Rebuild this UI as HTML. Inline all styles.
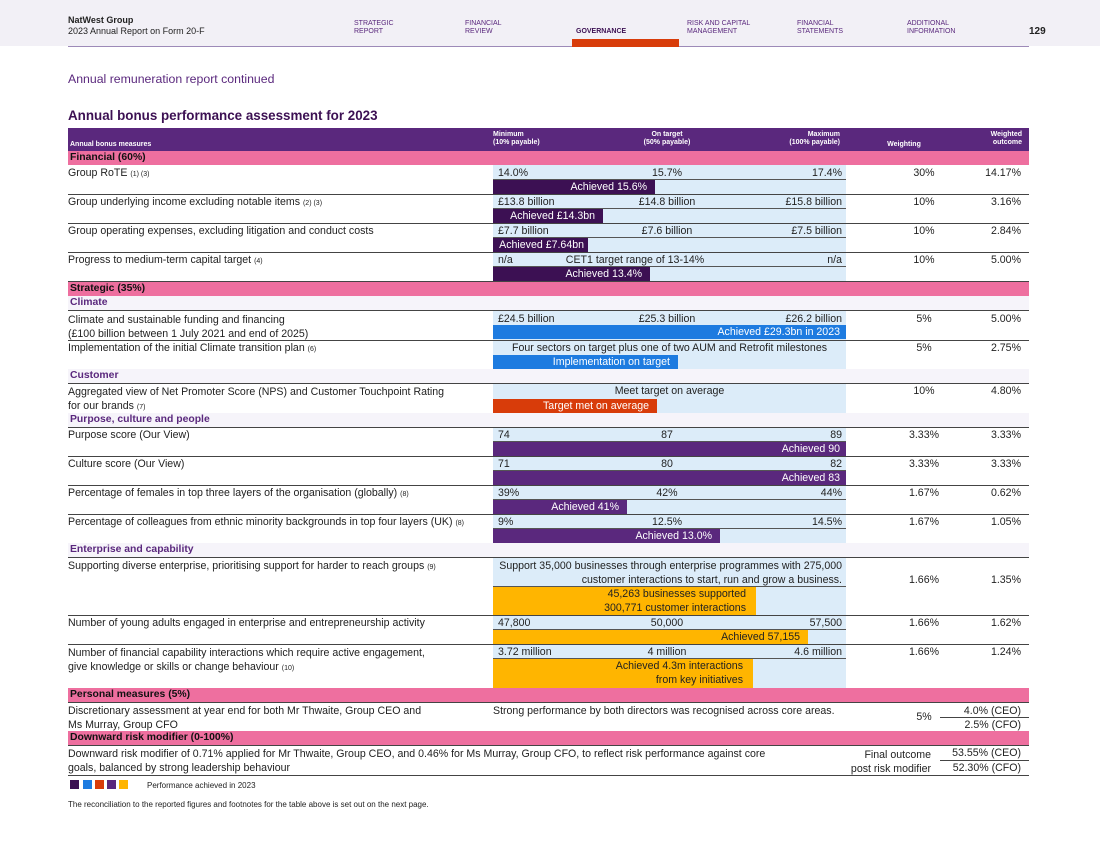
<!DOCTYPE html>
<html><head><meta charset="utf-8"><style>
*{margin:0;padding:0;box-sizing:border-box}
body{width:1100px;height:865px;position:relative;background:#fff;font-family:"Liberation Sans",sans-serif;color:#222;overflow:hidden}
div{position:absolute}
.t{font-size:10.6px;line-height:12px;white-space:nowrap}
.r{text-align:right}
.c{text-align:center}
.hl{left:68px;width:961px;height:1px;background:#444}
.band{left:493px;width:353px;background:#dcecf9}
.vl{left:493px;width:353px;height:1px;background:#555}
.pink{left:68px;width:961px;height:14px;background:#ee6f9f;font-size:10.4px;line-height:14px;font-weight:bold;padding-left:2px;color:#111}
.sub{left:68px;width:961px;height:14px;background:#f6f4fa;font-size:10.4px;line-height:14px;font-weight:bold;padding-left:2px;color:#5a287d}
.bar{left:493px;height:14px;font-size:10.6px;line-height:14px;text-align:right;padding-right:8px;color:#fff;white-space:nowrap}
.dp{background:#3c1053}.bl{background:#1d7be0}.or{background:#d83c0a}.pu{background:#5a287d}.ye{background:#ffb500;color:#222}
.nav{font-size:7px;line-height:8px;color:#5a287d;top:20px}
.sm{font-size:7px}
</style></head><body>
<div style="left:0;top:0;width:1100px;height:46px;background:#f2f0f6"></div>
<div class="t" style="left:68px;top:15px;font-size:9px;font-weight:bold;line-height:10px">NatWest Group</div>
<div class="t" style="left:68px;top:26px;font-size:9px;line-height:10px">2023 Annual Report on Form 20-F</div>
<div class="nav" style="left:354px">STRATEGIC<br>REPORT</div>
<div class="nav" style="left:465px">FINANCIAL<br>REVIEW</div>
<div class="nav" style="left:576px;top:28px;font-weight:bold;color:#3c1053">GOVERNANCE</div>
<div class="nav" style="left:687px">RISK AND CAPITAL<br>MANAGEMENT</div>
<div class="nav" style="left:797px">FINANCIAL<br>STATEMENTS</div>
<div class="nav" style="left:907px">ADDITIONAL<br>INFORMATION</div>
<div class="t" style="left:1029px;top:26px;font-size:10px;font-weight:bold">129</div>
<div style="left:68px;top:46px;width:961px;height:1px;background:#9d8ab8"></div>
<div style="left:572px;top:39px;width:107px;height:8px;background:#d83c0a"></div>

<div class="t" style="left:68px;top:72px;font-size:12.3px;line-height:14px;color:#5a287d">Annual remuneration report continued</div>
<div class="t" style="left:68px;top:107px;font-size:13.4px;line-height:17px;font-weight:bold;color:#3c1053">Annual bonus performance assessment for 2023</div>

<div style="left:68px;top:128px;width:961px;height:23px;background:#5a287d"></div>
<div class="t" style="left:70px;top:141px;font-size:7px;line-height:8px;color:#fff;font-weight:bold">Annual bonus measures</div>
<div class="t" style="left:493px;top:131px;font-size:7px;line-height:8px;color:#fff;font-weight:bold">Minimum<br>(10% payable)</div>
<div class="t c" style="left:617px;width:100px;top:131px;font-size:7px;line-height:8px;color:#fff;font-weight:bold">On target<br>(50% payable)</div>
<div class="t r" style="left:740px;width:100px;top:131px;font-size:7px;line-height:8px;color:#fff;font-weight:bold">Maximum<br>(100% payable)</div>
<div class="t c" style="left:854px;width:100px;top:141px;font-size:7px;line-height:8px;color:#fff;font-weight:bold">Weighting</div>
<div class="t r" style="left:920px;width:102px;top:131px;font-size:7px;line-height:8px;color:#fff;font-weight:bold">Weighted<br>outcome</div>

<div class="pink" style="top:151px">Financial (60%)</div>

<div class="band" style="top:165px;height:29px"></div>
<div class="t" style="left:68px;top:167px">Group RoTE <span class="sm">(1) (3)</span></div>
<div class="t" style="left:498px;top:167px">14.0%</div><div class="t c" style="left:617px;width:100px;top:167px">15.7%</div><div class="t r" style="left:742px;width:100px;top:167px">17.4%</div>
<div class="vl" style="top:179px"></div>
<div class="bar dp" style="top:180px;width:162px">Achieved 15.6%</div>
<div class="t c" style="left:874px;width:100px;top:167px">30%</div><div class="t r" style="left:920px;width:101px;top:167px">14.17%</div>
<div class="hl" style="top:194px"></div>

<div class="band" style="top:195px;height:28px"></div>
<div class="t" style="left:68px;top:196px">Group underlying income excluding notable items <span class="sm">(2) (3)</span></div>
<div class="t" style="left:498px;top:196px">£13.8 billion</div><div class="t c" style="left:617px;width:100px;top:196px">£14.8 billion</div><div class="t r" style="left:742px;width:100px;top:196px">£15.8 billion</div>
<div class="vl" style="top:208px"></div>
<div class="bar dp" style="top:209px;width:110px">Achieved £14.3bn</div>
<div class="t c" style="left:874px;width:100px;top:196px">10%</div><div class="t r" style="left:920px;width:101px;top:196px">3.16%</div>
<div class="hl" style="top:223px"></div>

<div class="band" style="top:224px;height:28px"></div>
<div class="t" style="left:68px;top:225px">Group operating expenses, excluding litigation and conduct costs</div>
<div class="t" style="left:498px;top:225px">£7.7 billion</div><div class="t c" style="left:617px;width:100px;top:225px">£7.6 billion</div><div class="t r" style="left:742px;width:100px;top:225px">£7.5 billion</div>
<div class="vl" style="top:237px"></div>
<div class="bar dp" style="top:238px;width:95px;padding-right:4px">Achieved £7.64bn</div>
<div class="t c" style="left:874px;width:100px;top:225px">10%</div><div class="t r" style="left:920px;width:101px;top:225px">2.84%</div>
<div class="hl" style="top:252px"></div>

<div class="band" style="top:253px;height:28px"></div>
<div class="t" style="left:68px;top:254px">Progress to medium-term capital target <span class="sm">(4)</span></div>
<div class="t" style="left:498px;top:254px">n/a</div><div class="t c" style="left:565px;width:140px;top:254px">CET1 target range of 13-14%</div><div class="t r" style="left:742px;width:100px;top:254px">n/a</div>
<div class="vl" style="top:266px"></div>
<div class="bar dp" style="top:267px;width:157px">Achieved 13.4%</div>
<div class="t c" style="left:874px;width:100px;top:254px">10%</div><div class="t r" style="left:920px;width:101px;top:254px">5.00%</div>
<div class="hl" style="top:281px"></div>

<div class="pink" style="top:282px">Strategic (35%)</div>
<div class="sub" style="top:296px">Climate</div>
<div class="hl" style="top:310px"></div>

<div class="band" style="top:311px;height:29px"></div>
<div class="t" style="left:68px;top:313px;line-height:14px">Climate and sustainable funding and financing<br>(£100 billion between 1 July 2021 and end of 2025)</div>
<div class="t" style="left:498px;top:313px">£24.5 billion</div><div class="t c" style="left:617px;width:100px;top:313px">£25.3 billion</div><div class="t r" style="left:742px;width:100px;top:313px">£26.2 billion</div>
<div class="bar bl" style="top:325px;width:353px;padding-right:6px">Achieved £29.3bn in 2023</div>
<div class="t c" style="left:874px;width:100px;top:313px">5%</div><div class="t r" style="left:920px;width:101px;top:313px">5.00%</div>
<div class="hl" style="top:340px"></div>

<div class="band" style="top:341px;height:28px"></div>
<div class="t" style="left:68px;top:342px">Implementation of the initial Climate transition plan <span class="sm">(6)</span></div>
<div class="t c" style="left:493px;width:353px;top:342px">Four sectors on target plus one of two AUM and Retrofit milestones</div>
<div class="bar bl" style="top:355px;width:185px">Implementation on target</div>
<div class="t c" style="left:874px;width:100px;top:342px">5%</div><div class="t r" style="left:920px;width:101px;top:342px">2.75%</div>
<div class="hl" style="top:369px"></div>
<div class="sub" style="top:369px">Customer</div>
<div class="hl" style="top:383px"></div>

<div class="band" style="top:384px;height:29px"></div>
<div class="t" style="left:68px;top:385px;line-height:14px">Aggregated view of Net Promoter Score (NPS) and Customer Touchpoint Rating<br>for our brands <span class="sm">(7)</span></div>
<div class="t c" style="left:493px;width:353px;top:385px">Meet target on average</div>
<div class="bar or" style="top:399px;width:164px">Target met on average</div>
<div class="t c" style="left:874px;width:100px;top:385px">10%</div><div class="t r" style="left:920px;width:101px;top:385px">4.80%</div>
<div class="hl" style="top:413px"></div>
<div class="sub" style="top:413px">Purpose, culture and people</div>
<div class="hl" style="top:427px"></div>

<div class="band" style="top:428px;height:28px"></div>
<div class="t" style="left:68px;top:429px">Purpose score (Our View)</div>
<div class="t" style="left:498px;top:429px">74</div><div class="t c" style="left:617px;width:100px;top:429px">87</div><div class="t r" style="left:742px;width:100px;top:429px">89</div>
<div class="vl" style="top:441px"></div>
<div class="bar pu" style="top:442px;width:353px;padding-right:6px">Achieved 90</div>
<div class="t c" style="left:874px;width:100px;top:429px">3.33%</div><div class="t r" style="left:920px;width:101px;top:429px">3.33%</div>
<div class="hl" style="top:456px"></div>

<div class="band" style="top:457px;height:28px"></div>
<div class="t" style="left:68px;top:458px">Culture score (Our View)</div>
<div class="t" style="left:498px;top:458px">71</div><div class="t c" style="left:617px;width:100px;top:458px">80</div><div class="t r" style="left:742px;width:100px;top:458px">82</div>
<div class="vl" style="top:470px"></div>
<div class="bar pu" style="top:471px;width:353px;padding-right:6px">Achieved 83</div>
<div class="t c" style="left:874px;width:100px;top:458px">3.33%</div><div class="t r" style="left:920px;width:101px;top:458px">3.33%</div>
<div class="hl" style="top:485px"></div>

<div class="band" style="top:486px;height:28px"></div>
<div class="t" style="left:68px;top:487px">Percentage of females in top three layers of the organisation (globally) <span class="sm">(8)</span></div>
<div class="t" style="left:498px;top:487px">39%</div><div class="t c" style="left:617px;width:100px;top:487px">42%</div><div class="t r" style="left:742px;width:100px;top:487px">44%</div>
<div class="vl" style="top:499px"></div>
<div class="bar pu" style="top:500px;width:134px">Achieved 41%</div>
<div class="t c" style="left:874px;width:100px;top:487px">1.67%</div><div class="t r" style="left:920px;width:101px;top:487px">0.62%</div>
<div class="hl" style="top:514px"></div>

<div class="band" style="top:515px;height:28px"></div>
<div class="t" style="left:68px;top:516px">Percentage of colleagues from ethnic minority backgrounds in top four layers (UK) <span class="sm">(8)</span></div>
<div class="t" style="left:498px;top:516px">9%</div><div class="t c" style="left:617px;width:100px;top:516px">12.5%</div><div class="t r" style="left:742px;width:100px;top:516px">14.5%</div>
<div class="vl" style="top:528px"></div>
<div class="bar pu" style="top:529px;width:227px">Achieved 13.0%</div>
<div class="t c" style="left:874px;width:100px;top:516px">1.67%</div><div class="t r" style="left:920px;width:101px;top:516px">1.05%</div>
<div class="hl" style="top:543px"></div>
<div class="sub" style="top:543px">Enterprise and capability</div>
<div class="hl" style="top:557px"></div>

<div class="band" style="top:558px;height:57px"></div>
<div class="t" style="left:68px;top:560px">Supporting diverse enterprise, prioritising support for harder to reach groups <span class="sm">(9)</span></div>
<div class="t r" style="left:493px;width:349px;top:559px;line-height:14px">Support 35,000 businesses through enterprise programmes with 275,000<br>customer interactions to start, run and grow a business.</div>
<div class="vl" style="top:586px"></div>
<div class="bar ye" style="top:587px;width:263px;height:28px;line-height:14px;text-align:right;padding-right:10px">45,263 businesses supported<br>300,771 customer interactions</div>
<div class="t c" style="left:874px;width:100px;top:574px">1.66%</div><div class="t r" style="left:920px;width:101px;top:574px">1.35%</div>
<div class="hl" style="top:615px"></div>

<div class="band" style="top:616px;height:28px"></div>
<div class="t" style="left:68px;top:617px">Number of young adults engaged in enterprise and entrepreneurship activity</div>
<div class="t" style="left:498px;top:617px">47,800</div><div class="t c" style="left:617px;width:100px;top:617px">50,000</div><div class="t r" style="left:742px;width:100px;top:617px">57,500</div>
<div class="vl" style="top:629px"></div>
<div class="bar ye" style="top:630px;width:315px">Achieved 57,155</div>
<div class="t c" style="left:874px;width:100px;top:617px">1.66%</div><div class="t r" style="left:920px;width:101px;top:617px">1.62%</div>
<div class="hl" style="top:644px"></div>

<div class="band" style="top:645px;height:43px"></div>
<div class="t" style="left:68px;top:646px;line-height:14px">Number of financial capability interactions which require active engagement,<br>give knowledge or skills or change behaviour <span class="sm">(10)</span></div>
<div class="t" style="left:498px;top:646px">3.72 million</div><div class="t c" style="left:617px;width:100px;top:646px">4 million</div><div class="t r" style="left:742px;width:100px;top:646px">4.6 million</div>
<div class="vl" style="top:658px"></div>
<div class="bar ye" style="top:659px;width:260px;height:29px;line-height:14px;padding-right:10px">Achieved 4.3m interactions<br>from key initiatives</div>
<div class="t c" style="left:874px;width:100px;top:646px">1.66%</div><div class="t r" style="left:920px;width:101px;top:646px">1.24%</div>
<div class="hl" style="top:688px"></div>

<div class="pink" style="top:688px">Personal measures (5%)</div>
<div class="hl" style="top:702px"></div>
<div class="t" style="left:68px;top:704px;line-height:14px">Discretionary assessment at year end for both Mr Thwaite, Group CEO and<br>Ms Murray, Group CFO</div>
<div class="t" style="left:493px;top:705px">Strong performance by both directors was recognised across core areas.</div>
<div class="t c" style="left:874px;width:100px;top:711px">5%</div>
<div class="t r" style="left:920px;width:101px;top:705px">4.0% (CEO)</div>
<div style="left:940px;top:717px;width:89px;height:1px;background:#444"></div>
<div class="t r" style="left:920px;width:101px;top:719px">2.5% (CFO)</div>
<div class="hl" style="top:731px"></div>
<div class="pink" style="top:731px">Downward risk modifier (0-100%)</div>
<div class="hl" style="top:745px"></div>
<div class="t" style="left:68px;top:747px;line-height:14px">Downward risk modifier of 0.71% applied for Mr Thwaite, Group CEO, and 0.46% for Ms Murray, Group CFO, to reflect risk performance against core<br>goals, balanced by strong leadership behaviour</div>
<div class="t r" style="left:800px;width:131px;top:748px;line-height:14px">Final outcome<br>post risk modifier</div>
<div class="t r" style="left:920px;width:101px;top:747px">53.55% (CEO)</div>
<div style="left:940px;top:760px;width:89px;height:1px;background:#444"></div>
<div class="t r" style="left:920px;width:101px;top:762px">52.30% (CFO)</div>
<div class="hl" style="top:775px"></div>

<div style="left:70px;top:780px;width:9px;height:9px;background:#3c1053"></div>
<div style="left:83px;top:780px;width:9px;height:9px;background:#1d7be0"></div>
<div style="left:95px;top:780px;width:9px;height:9px;background:#d83c0a"></div>
<div style="left:107px;top:780px;width:9px;height:9px;background:#5a287d"></div>
<div style="left:119px;top:780px;width:9px;height:9px;background:#ffb500"></div>
<div class="t" style="left:147px;top:781px;font-size:8px;line-height:9px">Performance achieved in 2023</div>
<div class="t" style="left:68px;top:800px;font-size:8px;line-height:9px">The reconciliation to the reported figures and footnotes for the table above is set out on the next page.</div>
</body></html>
